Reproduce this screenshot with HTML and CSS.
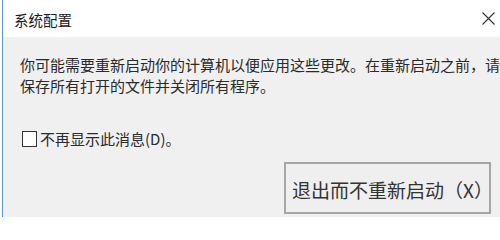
FILE: index.html
```html
<!DOCTYPE html>
<html lang="zh-CN">
<head>
<meta charset="utf-8">
<link rel="stylesheet" href="styles.css">
</head>
<body>
<div class="window">
  <div class="titlebar">
    <span class="title">系统配置</span>
    <svg class="close" width="13" height="13" viewBox="0 0 13 13"><path d="M0.5 0.5 L12.5 12.5 M12.5 0.5 L0.5 12.5" stroke="#333" stroke-width="1.1" fill="none"/></svg>
  </div>
  <div class="content">
    <p class="message">你可能需要重新启动你的计算机以便应用这些更改。在重新启动之前，请保存所有打开的文件并关闭所有程序。</p>
    <label class="check"><span class="box"></span><span>不再显示此消息(D)。</span></label>
    <div class="actions">
      <button class="btn">退出而不重新启动（X）</button>
    </div>
  </div>
</div>
</body>
</html>
```

FILE: styles.css
```css
html, body {
  margin: 0;
  padding: 0;
  background: #ffffff;
}
body {
  font-family: "Noto Sans CJK SC", "Microsoft YaHei", sans-serif;
  color: #222;
}
.window {
  margin-left: 2px;
  border-left: 1px solid #5f95c9;
  height: 217px;
  display: flex;
  flex-direction: column;
}
.titlebar {
  height: 37px;
  background: #fff;
  display: flex;
  align-items: center;
  justify-content: space-between;
  padding: 0 5px 0 11px;
  box-sizing: border-box;
}
.title {
  font-size: 14.5px;
  color: #1a1a1a;
  margin-top: 2px;
}
.close {
  margin-top: 0;
}
.content {
  flex: 1;
  background: #f0f0f0;
  padding: 17px 0 0 17px;
  display: flex;
  flex-direction: column;
}
.message {
  margin: 0;
  font-size: 15px;
  line-height: 21px;
  color: #2a2a2a;
  width: 481px;
}
.check {
  display: flex;
  align-items: center;
  gap: 3px;
  margin-top: 34px;
  font-size: 15px;
  line-height: 18px;
  color: #2a2a2a;
  margin-left: 2px;
}
.box {
  width: 13px;
  height: 14px;
  border: 1px solid #333;
  background: #fff;
}
.actions {
  display: flex;
  justify-content: flex-end;
  margin-top: 14px;
  padding-right: 9px;
}
.btn {
  width: 207px;
  height: 52px;
  border: 2px solid #a6a6a6;
  background: #efefef;
  font-family: "Noto Sans CJK SC", "Microsoft YaHei", sans-serif;
  font-size: 19px;
  color: #333;
  padding: 3px 0 0 6px;
  text-align: left;
  white-space: nowrap;
}
```
